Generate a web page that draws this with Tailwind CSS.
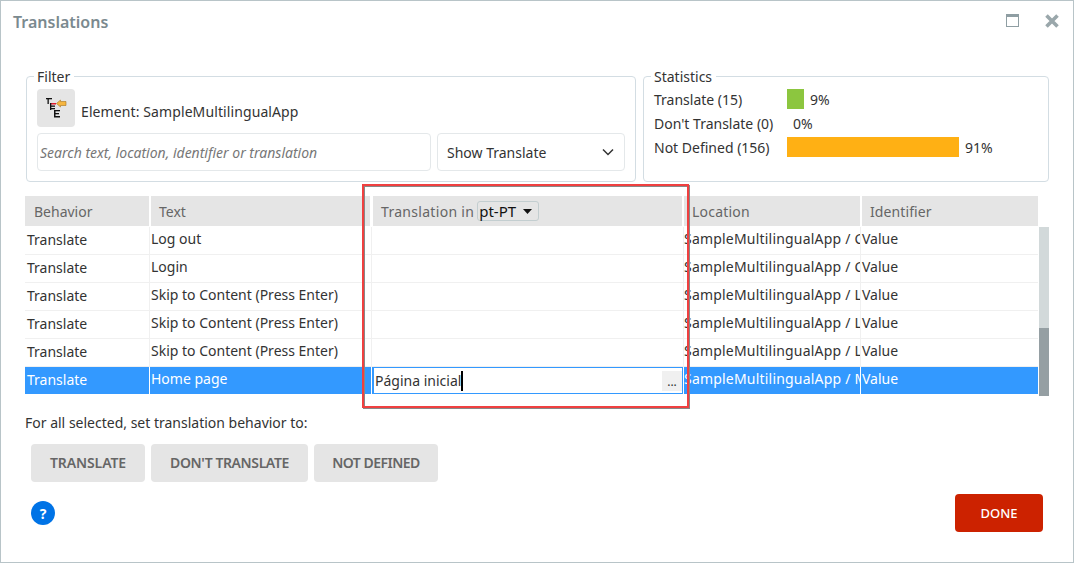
<!DOCTYPE html>
<html lang="en">
<head>
    <meta charset="UTF-8">
    <title>Translations</title>
    <script src="https://cdn.jsdelivr.net/npm/@tailwindcss/browser@4"></script>
</head>
<body class="bg-white font-['Noto_Sans',sans-serif] text-[14px] text-[#333]">
    <div class="relative w-[1074px] h-[563px] overflow-hidden border border-[#b8c4c8] bg-white">
        <!-- title bar -->
        <div class="flex items-center h-[44px] pb-[2px] pl-[12px] pr-[14px]">
            <h1 class="text-[16px] font-semibold text-[#7b8a8f]">Translations</h1>
            <svg class="ml-auto mb-[3px]" width="13" height="13" viewBox="0 0 13 13">
                <rect x="0.5" y="0.5" width="12" height="12" fill="#fff" stroke="#8f9ea3"/>
                <rect x="0" y="0" width="13" height="3" fill="#8f9ea3"/>
            </svg>
            <svg class="ml-[26px] mb-[2px]" width="14" height="14" viewBox="0 0 14 14">
                <path d="M1.5 1.5 L12.5 12.5 M12.5 1.5 L1.5 12.5" stroke="#9aa7ab" stroke-width="3.6"/>
            </svg>
        </div>

        <!-- filter + statistics -->
        <div class="flex gap-[7px] ml-[25px] mt-[21px]">
            <fieldset class="w-[610px] h-[116px] border border-[#d3dde3] rounded-[4px] px-[10px]">
                <legend class="-ml-[3px] pl-[3px] pr-[4px] leading-5 text-[14px] text-[#333]"><span class="relative top-px">Filter</span></legend>
                <div class="flex items-center gap-[6px] h-[38px] mt-[3px]">
                    <button class="flex items-center justify-center w-[38px] h-[38px] rounded-[4px] bg-[#e5e5e5]">
                        <svg width="22" height="22" viewBox="0 0 22 22">
                            <rect x="1" y="1" width="6" height="1.3" fill="#111"/>
                            <rect x="2.5" y="1" width="1.3" height="6" fill="#111"/>
                            <rect x="5" y="6" width="6" height="1.5" fill="#e01b2f"/>
                            <rect x="5" y="8.5" width="5" height="1.3" fill="#111"/>
                            <rect x="5" y="11" width="5" height="1.3" fill="#111"/>
                            <rect x="5" y="6" width="1.3" height="7" fill="#111"/>
                            <rect x="9" y="13" width="1.5" height="7" fill="#111"/>
                            <rect x="9" y="13" width="6" height="1.3" fill="#111"/>
                            <rect x="9" y="16" width="5" height="1.3" fill="#111"/>
                            <rect x="9" y="19" width="6" height="1.5" fill="#111"/>
                            <path d="M11.5 6.5 L15.5 3 V4.5 H21 V8.5 H15.5 V10 Z" fill="#f5b53f" stroke="#a8741c" stroke-width="0.6"/>
                        </svg>
                    </button>
                    <span class="pt-[7px] tracking-[0.1px]">Element: SampleMultilingualApp</span>
                </div>
                <div class="flex gap-[6px] mt-[6px]">
                    <input type="text" placeholder="Search text, location, identifier or translation" class="w-[394px] h-[38px] px-[2px] border border-[#e4e8ea] rounded-[4px] italic text-[14px] placeholder:text-[#777]">
                    <div class="flex items-center justify-between w-[188px] h-[38px] px-[9px] border border-[#e4e8ea] rounded-[4px]">
                        <span>Show Translate</span>
                        <svg width="14" height="14" viewBox="0 0 14 14"><path d="M2 4.5 L7 9.5 L12 4.5" fill="none" stroke="#333" stroke-width="1.5"/></svg>
                    </div>
                </div>
            </fieldset>
            <fieldset class="w-[406px] h-[116px] border border-[#d3dde3] rounded-[4px] px-[10px]">
                <legend class="-ml-[3px] pl-[3px] pr-[4px] leading-5 text-[14px] text-[#333]"><span class="relative top-px">Statistics</span></legend>
                <div class="flex items-center h-[24px] mt-[1px]">
                    <span class="w-[133px]">Translate (15)</span>
                    <div class="w-[17px] h-[20px] bg-[#8cc63f]"></div>
                    <span class="ml-[6px]">9%</span>
                </div>
                <div class="flex items-center h-[24px]">
                    <span class="w-[139px]">Don't Translate (0)</span>
                    <span>0%</span>
                </div>
                <div class="flex items-center h-[24px]">
                    <span class="w-[133px]">Not Defined (156)</span>
                    <div class="w-[172px] h-[20px] bg-[#ffb014]"></div>
                    <span class="ml-[6px]">91%</span>
                </div>
            </fieldset>
        </div>

        <!-- grid -->
        <div class="flex ml-[24px] mt-[14px] h-[200px]">
            <table class="table-fixed border-separate border-spacing-0 w-[1013px] h-min">
                <colgroup>
                    <col class="w-[125px]"><col class="w-[222px]"><col class="w-[312px]"><col class="w-[177px]"><col class="w-[177px]">
                </colgroup>
                <thead>
                    <tr class="text-left text-[#666]">
                        <th class="h-[31px] align-top p-0 font-normal"><div class="h-[30px] pt-[5px] mr-px pl-[9px] bg-[#e5e5e5]">Behavior</div></th>
                        <th class="h-[31px] align-top p-0 font-normal"><div class="h-[30px] pt-[5px] ml-px mr-[2px] pl-[8px] bg-[#e5e5e5]">Text</div></th>
                        <th class="h-[31px] align-top p-0 font-normal"><div class="flex items-center h-[30px] ml-px mr-[2px] pl-[8px] bg-[#e5e5e5] tracking-[0.3px]">Translation in
                            <span class="flex items-center gap-[7px] h-[20px] ml-[3px] pl-[1px] pr-[6px] border border-[#c3ced0] rounded-[3px] text-[15px] tracking-normal text-[#111]">pt-PT<svg width="9" height="5" viewBox="0 0 9 5"><path d="M0 0 H9 L4.5 5 Z" fill="#111"/></svg></span>
                        </div></th>
                        <th class="h-[31px] align-top p-0 font-normal"><div class="h-[30px] pt-[5px] mr-px pl-[8px] bg-[#e5e5e5] tracking-[0.2px]">Location</div></th>
                        <th class="h-[31px] align-top p-0 font-normal"><div class="h-[30px] pt-[5px] ml-px pl-[8px] bg-[#e5e5e5] tracking-[0.1px]">Identifier</div></th>
                    </tr>
                </thead>
                <tbody>
                    <tr class="h-[28px]">
                        <td class="align-top p-0 pl-[2px] pt-[2px] border-r border-b border-[#f0f0f0]">Translate</td>
                        <td class="align-top p-0 pl-px pt-px border-r border-b border-[#f0f0f0]">Log out</td>
                        <td class="p-0 border-r border-b border-[#f0f0f0]"></td>
                        <td class="align-top p-0 pt-px border-r border-b border-[#f0f0f0] overflow-hidden whitespace-nowrap tracking-[0.2px]">SampleMultilingualApp / Common / Layout</td>
                        <td class="align-top p-0 pl-px pt-px border-b border-[#f0f0f0]">Value</td>
                    </tr>
                    <tr class="h-[28px]">
                        <td class="align-top p-0 pl-[2px] pt-[2px] border-r border-b border-[#f0f0f0]">Translate</td>
                        <td class="align-top p-0 pl-px pt-px border-r border-b border-[#f0f0f0]">Login</td>
                        <td class="p-0 border-r border-b border-[#f0f0f0]"></td>
                        <td class="align-top p-0 pt-px border-r border-b border-[#f0f0f0] overflow-hidden whitespace-nowrap tracking-[0.2px]">SampleMultilingualApp / Common / Layout</td>
                        <td class="align-top p-0 pl-px pt-px border-b border-[#f0f0f0]">Value</td>
                    </tr>
                    <tr class="h-[28px]">
                        <td class="align-top p-0 pl-[2px] pt-[2px] border-r border-b border-[#f0f0f0]">Translate</td>
                        <td class="align-top p-0 pl-px pt-px border-r border-b border-[#f0f0f0]">Skip to Content (Press Enter)</td>
                        <td class="p-0 border-r border-b border-[#f0f0f0]"></td>
                        <td class="align-top p-0 pt-px border-r border-b border-[#f0f0f0] overflow-hidden whitespace-nowrap tracking-[0.2px]">SampleMultilingualApp / Layouts / Layout</td>
                        <td class="align-top p-0 pl-px pt-px border-b border-[#f0f0f0]">Value</td>
                    </tr>
                    <tr class="h-[28px]">
                        <td class="align-top p-0 pl-[2px] pt-[2px] border-r border-b border-[#f0f0f0]">Translate</td>
                        <td class="align-top p-0 pl-px pt-px border-r border-b border-[#f0f0f0]">Skip to Content (Press Enter)</td>
                        <td class="p-0 border-r border-b border-[#f0f0f0]"></td>
                        <td class="align-top p-0 pt-px border-r border-b border-[#f0f0f0] overflow-hidden whitespace-nowrap tracking-[0.2px]">SampleMultilingualApp / Layouts / Layout</td>
                        <td class="align-top p-0 pl-px pt-px border-b border-[#f0f0f0]">Value</td>
                    </tr>
                    <tr class="h-[28px]">
                        <td class="align-top p-0 pl-[2px] pt-[2px] border-r border-b border-[#f0f0f0]">Translate</td>
                        <td class="align-top p-0 pl-px pt-px border-r border-b border-[#f0f0f0]">Skip to Content (Press Enter)</td>
                        <td class="p-0 border-r border-b border-[#f0f0f0]"></td>
                        <td class="align-top p-0 pt-px border-r border-b border-[#f0f0f0] overflow-hidden whitespace-nowrap tracking-[0.2px]">SampleMultilingualApp / Layouts / Layout</td>
                        <td class="align-top p-0 pl-px pt-px border-b border-[#f0f0f0]">Value</td>
                    </tr>
                    <tr class="h-[27px] bg-[#3399ff] text-white">
                        <td class="align-top p-0 pl-[2px] pt-[2px] border-r border-white">Translate</td>
                        <td class="align-top p-0 pl-px pt-px border-r border-white">Home page</td>
                        <td class="p-0 border-r border-white">
                            <div class="flex items-center h-[27px] ml-px border border-[#3399ff] bg-white text-[#333] pl-px">
                                <span>Página inicial</span><span class="w-[2px] h-[20px] bg-black"></span>
                                <span class="flex items-end justify-center ml-auto w-[20px] h-[20px] bg-[#f0f0f0] text-[12px] leading-[18px]">...</span>
                            </div>
                        </td>
                        <td class="align-top p-0 pt-px border-r border-white overflow-hidden whitespace-nowrap tracking-[0.2px]">SampleMultilingualApp / Main / Navigation</td>
                        <td class="align-top p-0 pl-px pt-px">Value</td>
                    </tr>
                </tbody>
            </table>
            <!-- scrollbar -->
            <div class="flex flex-col w-[10px] h-[169px] mt-[31px] ml-px bg-[#d2d9da]">
                <div class="mt-auto h-[68px] bg-[#959fa3]"></div>
            </div>
        </div>

        <!-- bulk actions -->
        <p class="ml-[24px] mt-[17px] leading-[20px]">For all selected, set translation behavior to:</p>
        <div class="flex gap-[6px] ml-[30px] mt-[11px]">
            <button class="w-[114px] h-[38px] pb-[2px] rounded-[4px] bg-[#e5e5e5] text-[#666] font-semibold tracking-[-0.1px]">TRANSLATE</button>
            <button class="w-[157px] h-[38px] pb-[2px] rounded-[4px] bg-[#e5e5e5] text-[#666] font-semibold tracking-[-0.4px]">DON'T TRANSLATE</button>
            <button class="w-[124px] h-[38px] pb-[2px] rounded-[4px] bg-[#e5e5e5] text-[#666] font-semibold tracking-[-0.5px]">NOT DEFINED</button>
        </div>

        <!-- footer -->
        <div class="flex items-center justify-between ml-[30px] mr-[30px] mt-[12px]">
            <span class="flex items-center justify-center w-[24px] h-[24px] rounded-full bg-[#0073e6] text-white text-[14px] font-bold">?</span>
            <button class="w-[88px] h-[38px] pt-[2px] rounded-[4px] bg-[#cc2200] text-white text-[13px] font-medium">DONE</button>
        </div>

        <!-- annotation drawn over the screenshot -->
        <div class="absolute left-[361px] top-[183px] w-[327px] h-[224px] border-2 border-[#f04040] shadow-[1px_1px_0_#888,inset_1px_1px_0_#888]"></div>
    </div>
</body>
</html>
